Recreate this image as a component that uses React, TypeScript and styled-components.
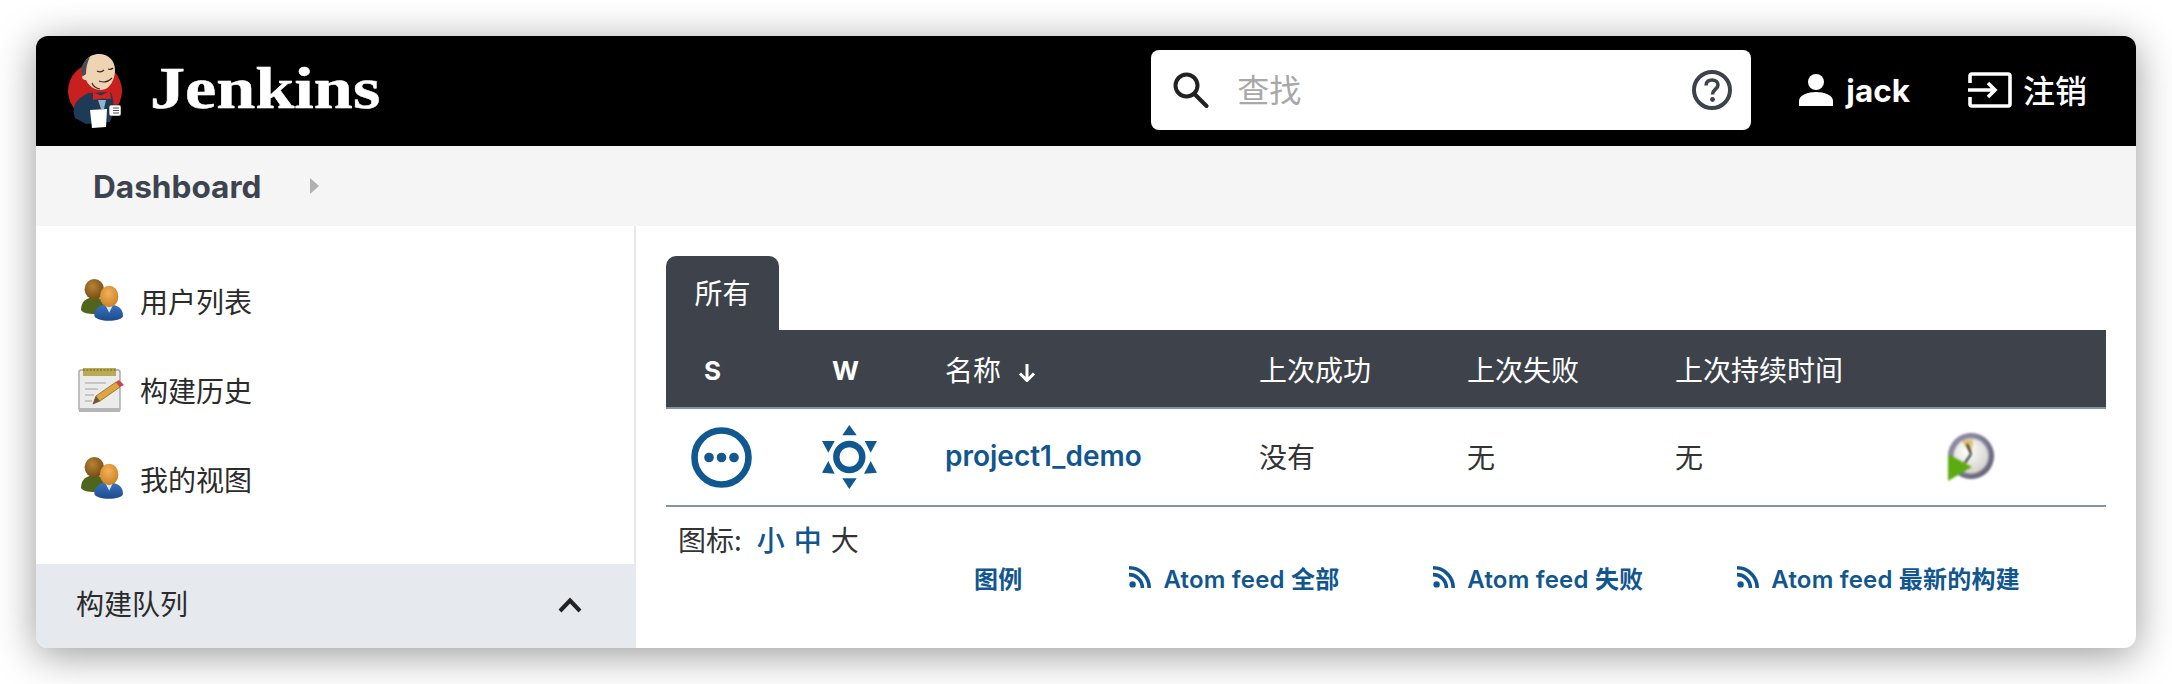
import React from "react";
import styled, { createGlobalStyle } from "styled-components";

const Global = createGlobalStyle`
  html, body { margin: 0; padding: 0; background: #fff; }
  body { font-family: Inter, "Noto Sans CJK SC", sans-serif; color: #333; overflow: hidden; }
  * { box-sizing: border-box; }
`;

const Page = styled.div`
  padding: 36px;
  width: 2172px;
  height: 684px;
`;
const Win = styled.div`
  width: 2100px;
  height: 612px;
  border-radius: 12px;
  overflow: hidden;
  background: #fff;
  box-shadow: 0 7px 40px rgba(0, 0, 0, 0.4);
  display: flex;
  flex-direction: column;
`;
const Header = styled.header`
  height: 110px;
  flex: none;
  background: #000;
  display: flex;
  align-items: center;
  padding: 0 49px 2px 32px;
`;
const Brand = styled.div`
  display: flex;
  align-items: center;
  gap: 27px;
  svg { filter: blur(0.3px); }
`;
const Wordmark = styled.span`
  font-family: "Liberation Serif", serif;
  font-weight: 700;
  font-size: 60px;
  color: #fff;
  line-height: 1;
  padding-bottom: 5px;
  transform: scaleX(1.17);
  transform-origin: left center;
  -webkit-text-stroke: 0.5px #fff;
`;
const SearchBox = styled.div`
  margin-left: auto;
  width: 600px;
  height: 80px;
  border-radius: 8px;
  background: #fff;
  display: flex;
  align-items: center;
  padding: 0 19px 0 22px;
  gap: 28px;
`;
const Placeholder = styled.span`
  flex: 1;
  font-size: 32px;
  color: #a8a8a8;
  padding-bottom: 4px;
  font-family: "Noto Sans CJK SC", sans-serif;
`;
const HeaderLink = styled.a<{ $gap: number; $ml: number }>`
  display: flex;
  align-items: center;
  gap: ${(p) => p.$gap}px;
  margin-left: ${(p) => p.$ml}px;
  color: #fff;
  font-size: 32px;
`;
const UserName = styled.b`
  font-size: 31.5px;
  font-weight: 700;
  font-family: Inter, sans-serif;
`;
const Logout = styled.span`
  font-family: "Noto Sans CJK SC", sans-serif;
  font-weight: 500;
  padding-bottom: 3px;
`;
const Crumbs = styled.nav`
  height: 80px;
  flex: none;
  background: #f5f5f6;
  display: flex;
  align-items: center;
  padding-left: 57px;
  gap: 49px;
`;
const Crumb = styled.span`
  font-size: 31.6px;
  font-weight: 700;
  color: #3d4450;
  font-family: Inter, sans-serif;
`;
const CrumbArrow = styled.i`
  width: 0;
  height: 0;
  border-left: 9px solid #b0b0b0;
  border-top: 8px solid transparent;
  border-bottom: 8px solid transparent;
`;
const Body = styled.div`
  flex: 1;
  display: flex;
  min-height: 0;
`;
const Side = styled.aside`
  width: 600px;
  flex: none;
  display: flex;
  flex-direction: column;
  border-right: 2px solid #e6eaee;
  padding-top: 30px;
`;
const SideItem = styled.a`
  height: 89px;
  display: flex;
  align-items: center;
  padding-left: 42px;
  gap: 15px;
  font-size: 28px;
  color: #2b2b2b;
  font-family: "Noto Sans CJK SC", sans-serif;
`;
const IconSlot = styled.span`
  width: 47px;
  height: 47px;
  flex: none;
  display: flex;
  align-items: center;
  justify-content: center;
  svg { display: block; filter: blur(0.4px); }
`;
const Queue = styled.div`
  margin-top: auto;
  margin-right: -2px;
  height: 84px;
  background: #e6eaee;
  display: flex;
  align-items: center;
  justify-content: space-between;
  padding: 0 54px 6px 40px;
  font-size: 28px;
  color: #2b2b2b;
  font-family: "Noto Sans CJK SC", sans-serif;
  svg { margin-top: 4px; }
`;
const Main = styled.main`
  flex: 1;
  padding: 30px 30px 0;
  min-width: 0;
`;
const Tab = styled.div`
  width: 113px;
  height: 74px;
  background: #3e434b;
  color: #fff;
  border-radius: 10px 10px 0 0;
  font-size: 28px;
  font-family: "Noto Sans CJK SC", sans-serif;
  display: flex;
  justify-content: center;
  padding-top: 18px;
  line-height: 1.35;
`;
const Table = styled.table`
  width: 1440px;
  table-layout: fixed;
  border-collapse: collapse;
  font-family: Inter, "Noto Sans CJK SC", sans-serif;
`;
const Th = styled.th<{ $w: number; $pl?: number; $bold?: boolean }>`
  width: ${(p) => p.$w}px;
  height: 78px;
  padding: ${(p) => (p.$bold ? 4 : 0)}px 0 0 ${(p) => p.$pl ?? 0}px;
  background: #3e434b;
  color: #fff;
  border-bottom: 2px solid #85939e;
  text-align: left;
  font-size: ${(p) => (p.$bold ? 26 : 28)}px;
  font-weight: ${(p) => (p.$bold ? 700 : 400)};
  svg { margin-left: 17px; vertical-align: -1px; }
`;
const Td = styled.td<{ $pl?: number; $text?: boolean }>`
  height: 98px;
  padding: 0 0 ${(p) => (p.$text ? 2 : 0)}px ${(p) => p.$pl ?? 0}px;
  border-bottom: 2px solid #85939e;
  font-size: 28px;
  color: #333;
  svg { display: block; }
`;
const ProjectLink = styled.a`
  color: #125690;
  font-weight: 600;
  font-size: 28px;
`;
const IconSizes = styled.div`
  display: flex;
  align-items: center;
  height: 38px;
  margin-top: 13px;
  padding-left: 12px;
  font-size: 28px;
  font-family: "Noto Sans CJK SC", sans-serif;
  color: #333;
`;
const SizeLabel = styled.span`
  margin-right: 15px;
`;
const SizeOption = styled.span<{ $active?: boolean }>`
  margin-right: 9px;
  color: ${(p) => (p.$active ? "#333" : "#125690")};
  font-weight: ${(p) => (p.$active ? 400 : 500)};
`;
const Legend = styled.div`
  display: flex;
  align-items: center;
  margin-top: -1px;
  height: 40px;
  padding-left: 308px;
  gap: 94px;
`;
const LegendLink = styled.a<{ $extra?: number }>`
  display: flex;
  align-items: center;
  gap: 12px;
  margin-right: ${(p) => p.$extra ?? 0}px;
  color: #125690;
  font-size: 24px;
  font-weight: 600;
  letter-spacing: 0.2px;
  font-family: Inter, "Noto Sans CJK SC", sans-serif;
  white-space: nowrap;
`;

const JenkinsLogo = () => (
  <svg width="55" height="75" viewBox="0 0 55 75">
    <ellipse cx="27" cy="38" rx="27" ry="27.5" fill="#c8201f" />
    <path d="M7 65C3 54 7 47 20 40L43 39C47 50 46 60 42 69L18 71Z" fill="#1d3a57" />
    <path d="M15 22C13 10 20 1 31 1C41 1 47 8 47 17C47 26 42 37 33 37C26 37 20 32 18 27C15 27 13 25 15 22Z" fill="#efd4b4" />
    <path d="M14 22C12 14 15 8 22 4C19 10 18 15 18 21L15.5 23Z" fill="#4a4d50" />
    <path d="M29 18q4 2 7-1M40 16q3 1 5-1M31 28q7 3 13-3M24 30q2 5 8 6" stroke="#3a2a20" strokeWidth="1.2" fill="none" />
    <path d="M25 39L33 42.5L42 38L43 46L34 45.5L25 47Z" fill="#d8231f" />
    <path d="M30 47L38 47L36 56L33 56Z" fill="#8fb2d0" />
    <path d="M22 57L39 56L38 74L24 75Z" fill="#fff" />
    <rect x="41" y="52" width="12" height="11" rx="2" fill="#fff" stroke="#222" strokeWidth="0.6" />
    <path d="M45 55h6M45 57.5h6M45 60h6" stroke="#222" strokeWidth="0.8" />
  </svg>
);

const SearchIcon = () => (
  <svg width="36" height="36" viewBox="0 0 36 36" fill="none" stroke="#222" strokeWidth="4" strokeLinecap="round">
    <circle cx="13.5" cy="13.5" r="11" />
    <path d="M21.5 22L33.5 34" />
  </svg>
);

const HelpIcon = () => (
  <svg width="40" height="40" viewBox="0 0 40 40" fill="none" stroke="#3e434b">
    <circle cx="20" cy="20" r="18" strokeWidth="4" />
    <path d="M14 15.5C14 11.5 17 10 20 10C23.5 10 26 12 26 15C26 19 20.5 19.5 20.5 24.5" strokeWidth="3.6" />
    <circle cx="20.5" cy="29.5" r="2.4" fill="#3e434b" stroke="none" />
  </svg>
);

const UserIcon = () => (
  <svg width="34" height="32" viewBox="0 0 34 32" fill="#fff">
    <ellipse cx="17" cy="8" rx="8" ry="8" />
    <path d="M0 32V27C0 21 9 18 17 18C25 18 34 21 34 27V32Z" />
  </svg>
);

const LogoutIcon = () => (
  <svg width="44" height="36" viewBox="0 0 44 36" fill="none" stroke="#fff" strokeWidth="3.6">
    <path d="M2 11V4a2 2 0 0 1 2-2h36a2 2 0 0 1 2 2v28a2 2 0 0 1-2 2H4a2 2 0 0 1-2-2v-7" />
    <path d="M0 18H27M20 11l7 7-7 7" />
  </svg>
);

const PeopleIcon = () => (
  <svg width="44" height="44" viewBox="0 0 43 43">
    <defs>
      <radialGradient id="hb" cx="0.4" cy="0.35" r="0.7">
        <stop offset="0" stopColor="#b98232" />
        <stop offset="1" stopColor="#6f4a16" />
      </radialGradient>
      <radialGradient id="ho" cx="0.45" cy="0.35" r="0.75">
        <stop offset="0" stopColor="#f2b25a" />
        <stop offset="1" stopColor="#c67a1c" />
      </radialGradient>
      <linearGradient id="bb" x1="0" y1="0" x2="0" y2="1">
        <stop offset="0" stopColor="#3a74bf" />
        <stop offset="1" stopColor="#1c4a8c" />
      </linearGradient>
    </defs>
    <path d="M1 30C1 22 6 18 14 18C22 18 27 23 27 30C27 35 3 36 1 30Z" fill="#4f651b" />
    <ellipse cx="14" cy="10" rx="9.5" ry="10" fill="url(#hb)" />
    <path d="M14 36C14 28 20 25 28 25C37 25 42 29 42 36C42 42 16 43 14 36Z" fill="url(#bb)" />
    <path d="M25 26L28.5 33L32 26Z" fill="#dfe7ef" />
    <ellipse cx="28.5" cy="17" rx="9" ry="10.5" fill="url(#ho)" />
  </svg>
);

const NotesIcon = () => (
  <svg width="47" height="46" viewBox="0 0 47 46">
    <rect x="1" y="3" width="41" height="41" rx="2" fill="#ebebeb" stroke="#a8a8a8" strokeWidth="1.4" />
    <rect x="1" y="41" width="41" height="4" fill="#b5b5b5" />
    <rect x="5" y="1" width="33" height="8" fill="#b9ab55" />
    <path d="M5 3h33" stroke="#8d8338" strokeWidth="2" strokeDasharray="2 1.4" />
    <path d="M7 16H28M7 22H20M7 28H16M7 34H14" stroke="#c6c6c6" strokeWidth="1.8" />
    <path d="M15 37L18 29L38 15L42 20L22 34Z" fill="#dfa540" stroke="#8a6420" strokeWidth="0.8" />
    <path d="M15 37L18 29L22 34Z" fill="#6a5a3c" />
    <path d="M38 15L41 13L46 18L42 20Z" fill="#c9454a" />
  </svg>
);

const StatusIcon = () => (
  <svg width="61" height="61" viewBox="0 0 61 61">
    <circle cx="30.5" cy="30.5" r="27" fill="none" stroke="#10588f" strokeWidth="6.6" />
    <circle cx="18" cy="30.5" r="4.8" fill="#10588f" />
    <circle cx="30.5" cy="30.5" r="4.8" fill="#10588f" />
    <circle cx="43" cy="30.5" r="4.8" fill="#10588f" />
  </svg>
);

const WeatherIcon = () => (
  <svg width="55" height="64" viewBox="0 0 55 64" fill="#10588f">
    <path d="M27.3 0L20.3 10.3H34.7Z" />
    <path d="M27.3 64L20.3 53.3H34.7Z" />
    <path d="M55 16H42.7L48.7 27.7Z" />
    <path d="M0 16H12.7L6.3 27.7Z" />
    <path d="M55 47.7L48.7 36L42 48.7Z" />
    <path d="M0 47.7L6.3 36L12.7 48.7Z" />
    <circle cx="27.3" cy="32" r="13" fill="none" stroke="#10588f" strokeWidth="6.4" />
  </svg>
);

const ScheduleIcon = () => (
  <svg width="46" height="48" viewBox="0 0 46 48" style={{ filter: "blur(0.8px)" }}>
    <defs>
      <radialGradient id="ring" cx="0.45" cy="0.45" r="0.55">
        <stop offset="0.7" stopColor="#8c89a3" />
        <stop offset="1" stopColor="#5f5c72" />
      </radialGradient>
      <radialGradient id="dial" cx="0.4" cy="0.35" r="0.75">
        <stop offset="0" stopColor="#ffffff" />
        <stop offset="1" stopColor="#cfcdc4" />
      </radialGradient>
    </defs>
    <circle cx="23" cy="23" r="23" fill="url(#ring)" />
    <circle cx="23" cy="23" r="17.5" fill="url(#dial)" />
    <path d="M23 22L14 8Q18 6 25 7Z" fill="#d8c26a" />
    <path d="M23 21L19 11M23 21L17 30" stroke="#2a2a2a" strokeWidth="2" fill="none" />
    <path d="M0 21V48L24 34Z" fill="#5cab12" />
  </svg>
);

const RssIcon = () => (
  <svg width="22" height="22" viewBox="0 0 22 22" fill="none" stroke="#125690" strokeWidth="3.6">
    <circle cx="3.6" cy="18.4" r="3.2" fill="#125690" stroke="none" />
    <path d="M0 8.6A13.4 13.4 0 0 1 13.4 22" />
    <path d="M0 1.8A20.2 20.2 0 0 1 20.2 22" />
  </svg>
);

const SortArrow = () => (
  <svg width="18" height="18" viewBox="0 0 18 18" fill="none" stroke="#fff" strokeWidth="3">
    <path d="M9 0V16M2 9.5L9 16.5L16 9.5" />
  </svg>
);

const Chevron = () => (
  <svg width="24" height="16" viewBox="0 0 24 16" fill="none" stroke="#222" strokeWidth="4">
    <path d="M2 14L12 3.5L22 14" />
  </svg>
);

export default function App() {
  return (
    <Page>
      <Global />
      <Win>
        <Header>
          <Brand>
            <JenkinsLogo />
            <Wordmark>Jenkins</Wordmark>
          </Brand>
          <SearchBox>
            <SearchIcon />
            <Placeholder>查找</Placeholder>
            <HelpIcon />
          </SearchBox>
          <HeaderLink $gap={13} $ml={48}>
            <UserIcon />
            <UserName>jack</UserName>
          </HeaderLink>
          <HeaderLink $gap={11} $ml={58}>
            <LogoutIcon />
            <Logout>注销</Logout>
          </HeaderLink>
        </Header>
        <Crumbs>
          <Crumb>Dashboard</Crumb>
          <CrumbArrow />
        </Crumbs>
        <Body>
          <Side>
            <SideItem><IconSlot><PeopleIcon /></IconSlot>用户列表</SideItem>
            <SideItem><IconSlot><NotesIcon /></IconSlot>构建历史</SideItem>
            <SideItem><IconSlot><PeopleIcon /></IconSlot>我的视图</SideItem>
            <Queue>
              构建队列
              <Chevron />
            </Queue>
          </Side>
          <Main>
            <Tab>所有</Tab>
            <Table>
              <thead>
                <tr>
                  <Th $w={134} $pl={38} $bold>S</Th>
                  <Th $w={145} $pl={32} $bold>W</Th>
                  <Th $w={314}>名称<SortArrow /></Th>
                  <Th $w={208}>上次成功</Th>
                  <Th $w={208}>上次失败</Th>
                  <Th $w={273}>上次持续时间</Th>
                  <Th $w={158} />
                </tr>
              </thead>
              <tbody>
                <tr>
                  <Td $pl={25}><StatusIcon /></Td>
                  <Td $pl={22}><WeatherIcon /></Td>
                  <Td $text><ProjectLink>project1_demo</ProjectLink></Td>
                  <Td $text>没有</Td>
                  <Td $text>无</Td>
                  <Td $text>无</Td>
                  <Td><ScheduleIcon /></Td>
                </tr>
              </tbody>
            </Table>
            <IconSizes>
              <SizeLabel>图标:</SizeLabel>
              <SizeOption>小</SizeOption>
              <SizeOption>中</SizeOption>
              <SizeOption $active>大</SizeOption>
            </IconSizes>
            <Legend>
              <LegendLink $extra={13}>图例</LegendLink>
              <LegendLink><RssIcon />Atom feed 全部</LegendLink>
              <LegendLink><RssIcon />Atom feed 失败</LegendLink>
              <LegendLink><RssIcon />Atom feed 最新的构建</LegendLink>
            </Legend>
          </Main>
        </Body>
      </Win>
    </Page>
  );
}
